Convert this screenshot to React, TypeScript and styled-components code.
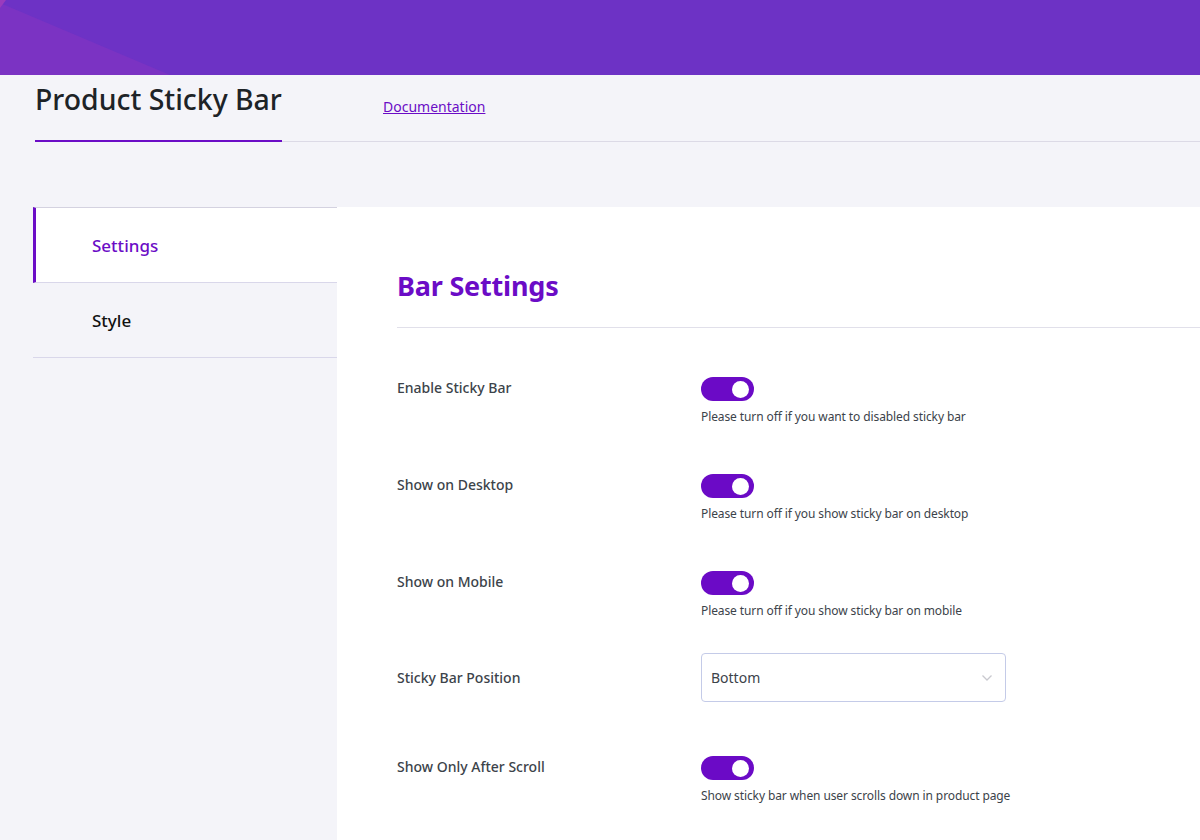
import styled, { createGlobalStyle } from "styled-components";

const GlobalStyle = createGlobalStyle`
  html, body {
    margin: 0;
    padding: 0;
    background: #f4f4f9;
    font-family: "Noto Sans", "Open Sans", sans-serif;
    color: #3c434a;
  }
  * { box-sizing: border-box; }
`;

const Page = styled.div`
  width: 100%;
  min-height: 840px;
  display: flex;
  flex-direction: column;
  overflow: hidden;
`;

const Banner = styled.div`
  position: relative;
  height: 75px;
  background: #6d32c5;
  flex-shrink: 0;

  &::before {
    content: "";
    position: absolute;
    inset: 0;
    background: #7b33c3;
    clip-path: polygon(0 3px, 170px 75px, 0 75px);
  }

  &::after {
    content: "";
    position: absolute;
    left: 0;
    top: 0;
    width: 6px;
    height: 8px;
    background: #9a3bbd;
    clip-path: polygon(0 0, 100% 0, 0 100%);
  }
`;

const TabBar = styled.div`
  display: flex;
  align-items: stretch;
  height: 67px;
  margin-left: 35px;
  border-bottom: 1px solid #dcdae6;
`;

const TitleTab = styled.div`
  display: flex;
  align-items: flex-start;
  padding-top: 5px;
  width: 247px;
  border-bottom: 2px solid #6b0cc6;
  margin-bottom: -1px;
  font-size: 28.4px;
  font-weight: 500;
  color: #1d2327;
  white-space: nowrap;
`;

const DocLink = styled.a`
  margin-left: 101px;
  padding-top: 22px;
  font-size: 14px;
  color: #6b0cc6;
  text-decoration: underline;
`;

const Body = styled.div`
  display: flex;
  margin-top: 65px;
  flex: 1;
`;

const Sidebar = styled.nav`
  width: 304px;
  margin-left: 33px;
  flex-shrink: 0;
  display: flex;
  flex-direction: column;
`;

const NavItem = styled.div<{ $active?: boolean }>`
  height: ${(p) => (p.$active ? "76px" : "75px")};
  display: flex;
  align-items: center;
  padding-left: ${(p) => (p.$active ? "56px" : "59px")};
  font-size: 17px;
  font-weight: 500;
  color: ${(p) => (p.$active ? "#6b0cc6" : "#111")};
  background: ${(p) => (p.$active ? "#fff" : "transparent")};
  border-left: ${(p) => (p.$active ? "3px solid #6b0cc6" : "none")};
  border-top: ${(p) => (p.$active ? "1px solid #d4d2e0" : "none")};
  border-bottom: 1px solid #d9d7ea;
`;

const Main = styled.main`
  flex: 1;
  background: #fff;
  padding: 53px 0 0 60px;
`;

const Heading = styled.h2`
  margin: 0;
  font-size: 27px;
  font-weight: 700;
  color: #6b0cc6;
  line-height: 52px;
  padding-bottom: 15px;
  border-bottom: 1px solid #e1e0ea;
  letter-spacing: -0.2px;
`;

const Rows = styled.div`
  padding-top: 25px;
`;

const Row = styled.div<{ $center?: boolean; $pt: number; $pb: number }>`
  display: flex;
  align-items: ${(p) => (p.$center ? "center" : "flex-start")};
  padding: ${(p) => p.$pt}px 0 ${(p) => p.$pb}px;
`;

const Label = styled.div`
  width: 304px;
  font-size: 14px;
  font-weight: 500;
  line-height: 22px;
  color: #3c434a;
`;

const Control = styled.div`
  display: flex;
  flex-direction: column;
`;

const Toggle = styled.span<{ $on?: boolean }>`
  position: relative;
  display: block;
  width: 53px;
  height: 24px;
  border-radius: 12px;
  background: ${(p) => (p.$on ? "#6b0ac6" : "#ccc")};

  &::after {
    content: "";
    position: absolute;
    top: 4px;
    left: ${(p) => (p.$on ? "31px" : "4px")};
    width: 17px;
    height: 17px;
    border-radius: 50%;
    background: #fff;
  }
`;

const Hint = styled.div`
  margin-top: 7px;
  font-size: 12px;
  line-height: 18px;
  color: #3c434a;
  letter-spacing: -0.1px;
`;

const Select = styled.div`
  width: 305px;
  height: 49px;
  border: 1px solid #c4cbe8;
  border-radius: 4px;
  display: flex;
  align-items: center;
  justify-content: space-between;
  padding: 0 12px 0 9px;
  font-size: 14px;
  color: #3c434a;
`;

const Chevron = () => (
  <svg width="12" height="8" viewBox="0 0 12 8" fill="none">
    <path d="M1.5 1.5 L6 6 L10.5 1.5" stroke="#c9c9cf" strokeWidth="1.3" />
  </svg>
);

const toggles = [
  { label: "Enable Sticky Bar", hint: "Please turn off if you want to disabled sticky bar" },
  { label: "Show on Desktop", hint: "Please turn off if you show sticky bar on desktop" },
  { label: "Show on Mobile", hint: "Please turn off if you show sticky bar on mobile" },
];

export default function App() {
  return (
    <Page>
      <GlobalStyle />
      <Banner />
      <TabBar>
        <TitleTab>Product Sticky Bar</TitleTab>
        <DocLink href="#">Documentation</DocLink>
      </TabBar>
      <Body>
        <Sidebar>
          <NavItem $active>Settings</NavItem>
          <NavItem>Style</NavItem>
        </Sidebar>
        <Main>
          <Heading>Bar Settings</Heading>
          <Rows>
            {toggles.map((t) => (
              <Row key={t.label} $pt={24} $pb={24}>
                <Label>{t.label}</Label>
                <Control>
                  <Toggle $on />
                  <Hint>{t.hint}</Hint>
                </Control>
              </Row>
            ))}
            <Row $center $pt={9} $pb={30}>
              <Label>Sticky Bar Position</Label>
              <Select>
                <span>Bottom</span>
                <Chevron />
              </Select>
            </Row>
            <Row $pt={24} $pb={25}>
              <Label>Show Only After Scroll</Label>
              <Control>
                <Toggle $on />
                <Hint>Show sticky bar when user scrolls down in product page</Hint>
              </Control>
            </Row>
          </Rows>
        </Main>
      </Body>
    </Page>
  );
}
